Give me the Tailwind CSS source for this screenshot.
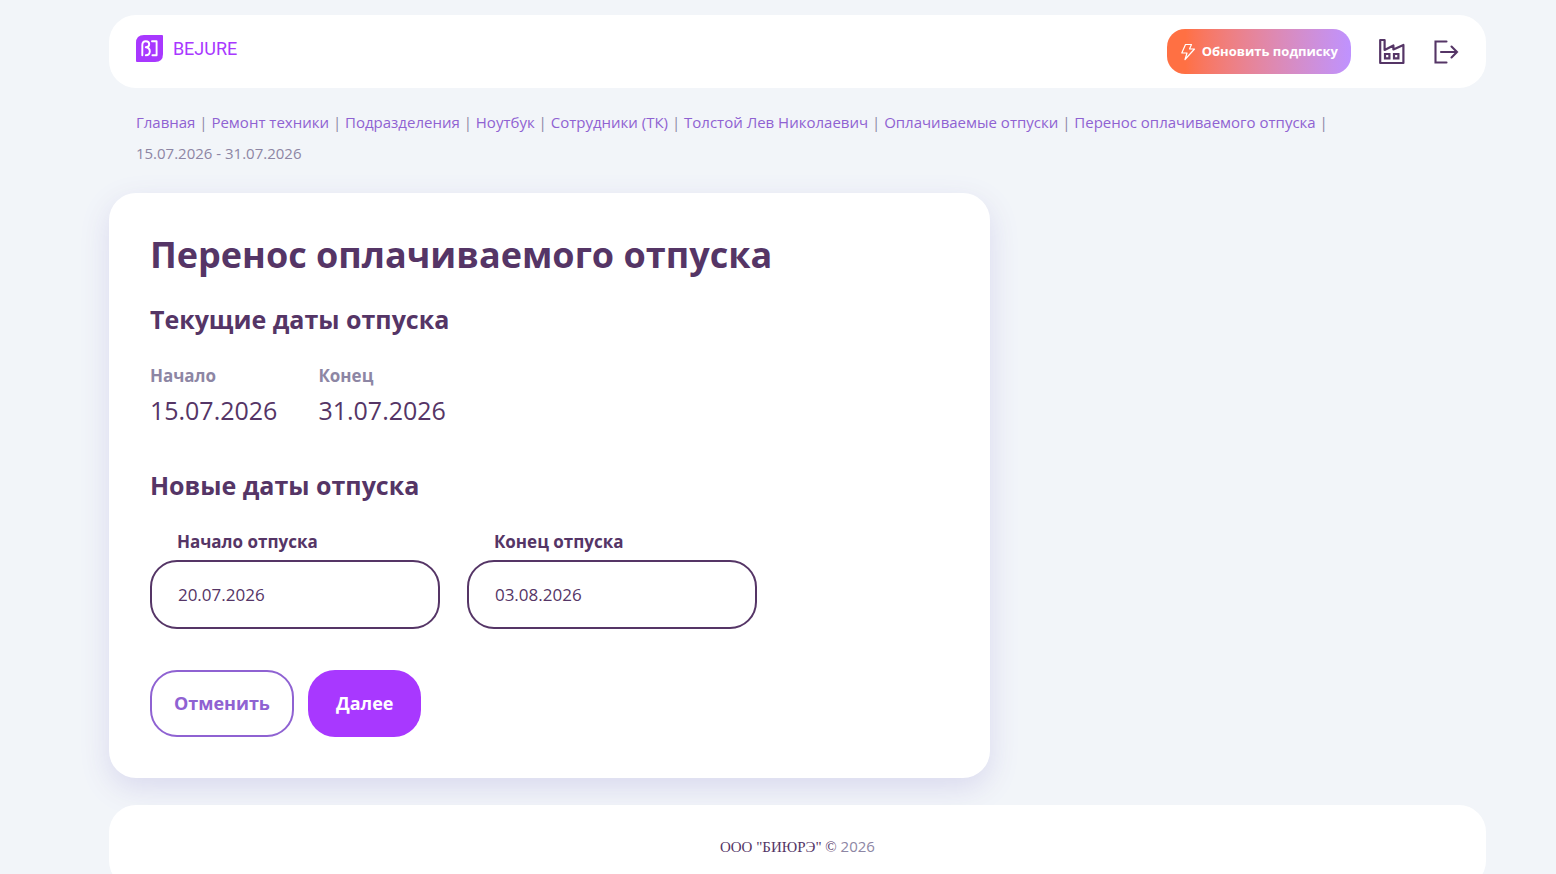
<!DOCTYPE html>
<html lang="ru">
<head>
<meta charset="utf-8">
<meta name="viewport" content="width=device-width, initial-scale=1">
<title>Перенос оплачиваемого отпуска</title>
<script src="https://cdn.jsdelivr.net/npm/@tailwindcss/browser@4"></script>
</head>
<body class="min-h-screen bg-[#f2f5f9] pt-[15px] pr-[4.5%] pl-[7%] font-['Open_Sans','Noto_Sans',sans-serif] text-[#553566]">
<header class="flex h-[73px] items-center justify-between rounded-[27px] bg-white pr-[27px] pl-[27px]">
  <a href="#" class="flex items-center gap-[10px] pb-[6px] text-[#a838ff]" aria-label="BEJURE">
    <svg class="size-[27px]" viewBox="0 0 27 27" fill="none">
      <path d="M8 0H26Q27 0 27 1V19Q27 27 19 27H1Q0 27 0 26V8Q0 0 8 0Z" fill="currentColor"/>
      <g stroke="#fff" stroke-width="1.9" stroke-linejoin="round" stroke-linecap="round">
        <path d="M6.3 20.3V10.2Q6.3 6.3 9.8 6.3Q13.2 6.3 13.2 9.2Q13.2 12.2 9.8 12.2M9.8 12.2Q13.8 12.6 13.8 16.3Q13.8 20.3 9.8 20.3"/>
        <path d="M16 6.3H20.6V20.3H16.4"/>
      </g>
    </svg>
    <span class="font-[Roboto] text-lg">BEJURE</span>
  </a>
  <div class="flex items-center">
    <button type="button" class="flex h-[45px] items-center gap-[6px] rounded-[18px] bg-linear-to-r from-[#ff7043] from-10% to-[#bf92ff] px-[13px] text-[13px] font-bold text-white">
      <svg class="h-[18px] w-4" viewBox="0 0 16 18" fill="none" stroke="currentColor" stroke-width="1.2" stroke-linejoin="round"><path d="M5.5 1.5H11.5L9.5 6H14.5L5 16.5L7 10H1.8Z"/></svg>
      Обновить подписку
    </button>
    <a href="#" class="ml-7" aria-label="Организация">
      <svg class="h-[27px] w-[26px]" viewBox="0 0 26 27" fill="none" stroke="currentColor" stroke-width="2.2"><path d="M1.2 25V2H5.6V12L14.4 7.5V11.5L24.4 7V25Z" stroke-linejoin="round"/><path d="M6 16H10.4V20.4H6ZM15 16H19.4V20.4H15Z"/></svg>
    </a>
    <a href="#" class="ml-7" aria-label="Выйти">
      <svg class="h-6 w-[26px]" viewBox="0 0 26 24" fill="none" stroke="currentColor" stroke-width="2.1" stroke-linecap="round"><path d="M13.5 1.5H2.5V22.5H13.5"/><path d="M8 12H24M18.5 6.5L24 12L18.5 17.5"/></svg>
    </a>
  </div>
</header>

<nav aria-label="Навигация" class="mt-[19px] px-[27px] text-[15px] leading-[31px] text-[#8d86a4]">
  <a href="#" class="text-[#8f62d2]">Главная</a> |
  <a href="#" class="text-[#8f62d2]">Ремонт техники</a> |
  <a href="#" class="text-[#8f62d2]">Подразделения</a> |
  <a href="#" class="text-[#8f62d2]">Ноутбук</a> |
  <a href="#" class="text-[#8f62d2]">Сотрудники (ТК)</a> |
  <a href="#" class="text-[#8f62d2]">Толстой Лев Николаевич</a> |
  <a href="#" class="text-[#8f62d2]">Оплачиваемые отпуски</a> |
  <a href="#" class="text-[#8f62d2]">Перенос оплачиваемого отпуска</a> |
  <span class="block">15.07.2026 - 31.07.2026</span>
</nav>

<main class="mt-6 w-[64%] rounded-[27px] bg-white p-[41px] shadow-[0_10px_30px_#d9d9ee]">
  <h1 class="text-[36px] leading-[42px] font-bold">Перенос оплачиваемого отпуска</h1>
  <h2 class="mt-[25px] text-[25px] leading-9 font-bold">Текущие даты отпуска</h2>
  <dl class="mt-[25px] flex gap-[41px]">
    <div>
      <dt class="text-[17px] leading-7 font-bold text-[#8d86a4]">Начало</dt>
      <dd class="text-[25px] leading-[41px]">15.07.2026</dd>
    </div>
    <div>
      <dt class="text-[17px] leading-7 font-bold text-[#8d86a4]">Конец</dt>
      <dd class="text-[25px] leading-[41px]">31.07.2026</dd>
    </div>
  </dl>
  <form>
    <h2 class="mt-9 text-[25px] leading-9 font-bold">Новые даты отпуска</h2>
    <div class="mt-[23px] flex gap-[27px]">
      <div class="w-[290px]">
        <label for="start" class="block pl-[27px] text-[17px] leading-[31px] font-bold">Начало отпуска</label>
        <input id="start" type="text" value="20.07.2026" class="mt-[3px] block h-[69px] w-full rounded-[27px] border-2 border-[#553566] bg-white px-[26px] text-[17px] outline-none">
      </div>
      <div class="w-[290px]">
        <label for="end" class="block pl-[27px] text-[17px] leading-[31px] font-bold">Конец отпуска</label>
        <input id="end" type="text" value="03.08.2026" class="mt-[3px] block h-[69px] w-full rounded-[27px] border-2 border-[#553566] bg-white px-[26px] text-[17px] outline-none">
      </div>
    </div>
    <div class="mt-[41px] flex gap-[14px]">
      <button type="button" class="h-[67px] rounded-[27px] border-2 border-[#8f62d2] px-[22px] text-[18px] font-bold text-[#8f62d2]">Отменить</button>
      <button type="submit" class="h-[67px] rounded-[27px] bg-[#a838ff] px-7 text-[18px] font-bold text-white">Далее</button>
    </div>
  </form>
</main>

<footer class="mt-[27px] flex h-[83px] items-center justify-center rounded-[27px] bg-white text-[15px]">
  <p><span class="font-['Liberation_Serif']">ООО "БИЮРЭ" ©</span> <span class="text-[#8d86a4]">2026</span></p>
</footer>
</body>
</html>
